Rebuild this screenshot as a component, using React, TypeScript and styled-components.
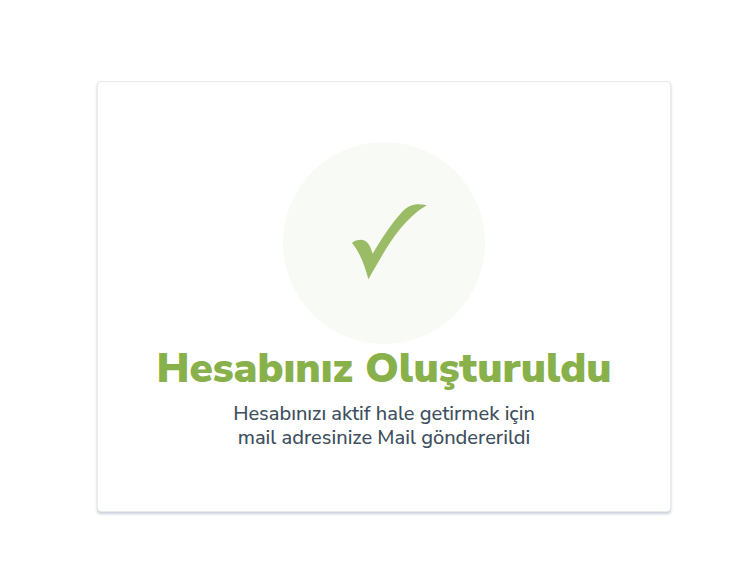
import React from "react";
import styled, { createGlobalStyle } from "styled-components";

const GlobalStyle = createGlobalStyle`
  * { box-sizing: border-box; }
  body {
    margin: 0;
    background: #ffffff;
    font-family: "Nunito Sans", Nunito, Lato, "Open Sans", sans-serif;
  }
`;

const Page = styled.main`
  display: flex;
  justify-content: center;
  padding: 81px 82px 72px 97px;
`;

const Card = styled.section`
  flex: 1;
  display: flex;
  flex-direction: column;
  align-items: center;
  padding: 60px 40px;
  border: 1px solid #e8eaeb;
  border-radius: 4px;
  background: #ffffff;
  box-shadow: 0 2px 3px #c8d0d8;
  text-align: center;
`;

const Badge = styled.div`
  display: flex;
  align-items: center;
  justify-content: center;
  width: 202px;
  height: 202px;
  border-radius: 50%;
  background: #f8faf5;
`;

const CheckMark = styled.svg`
  width: 100px;
  height: 100px;
  fill: #9abc66;
`;

const Title = styled.h1`
  margin: 0 0 8px;
  color: #88b04b;
  font-size: 42px;
  font-weight: 900;
  line-height: 50px;
  white-space: nowrap;
`;

const Message = styled.p`
  margin: 0;
  padding-bottom: 1px;
  color: #404f5e;
  font-size: 20px;
  font-weight: 500;
  line-height: 24px;
`;

export default function App() {
  return (
    <>
      <GlobalStyle />
      <Page>
        <Card>
          <Badge>
            <CheckMark viewBox="-6 3 100 100" aria-hidden="true">
              <path d="M12 53C15.500 50.200 20.500 48.900 24.500 50.600C29 52.600 31 58.500 32.700 63.800C41 49.500 52 32.500 62.500 21.500C69.500 14.300 76 13.100 86.800 15.200C77.500 20.500 68 29.500 60 39C50 51 40 69 28.400 89.200C24.800 76 20.500 63.500 12 53Z" />
            </CheckMark>
          </Badge>
          <Title>Hesabınız Oluşturuldu</Title>
          <Message>
            Hesabınızı aktif hale getirmek için
            <br />
            mail adresinize Mail göndererildi
          </Message>
        </Card>
      </Page>
    </>
  );
}
